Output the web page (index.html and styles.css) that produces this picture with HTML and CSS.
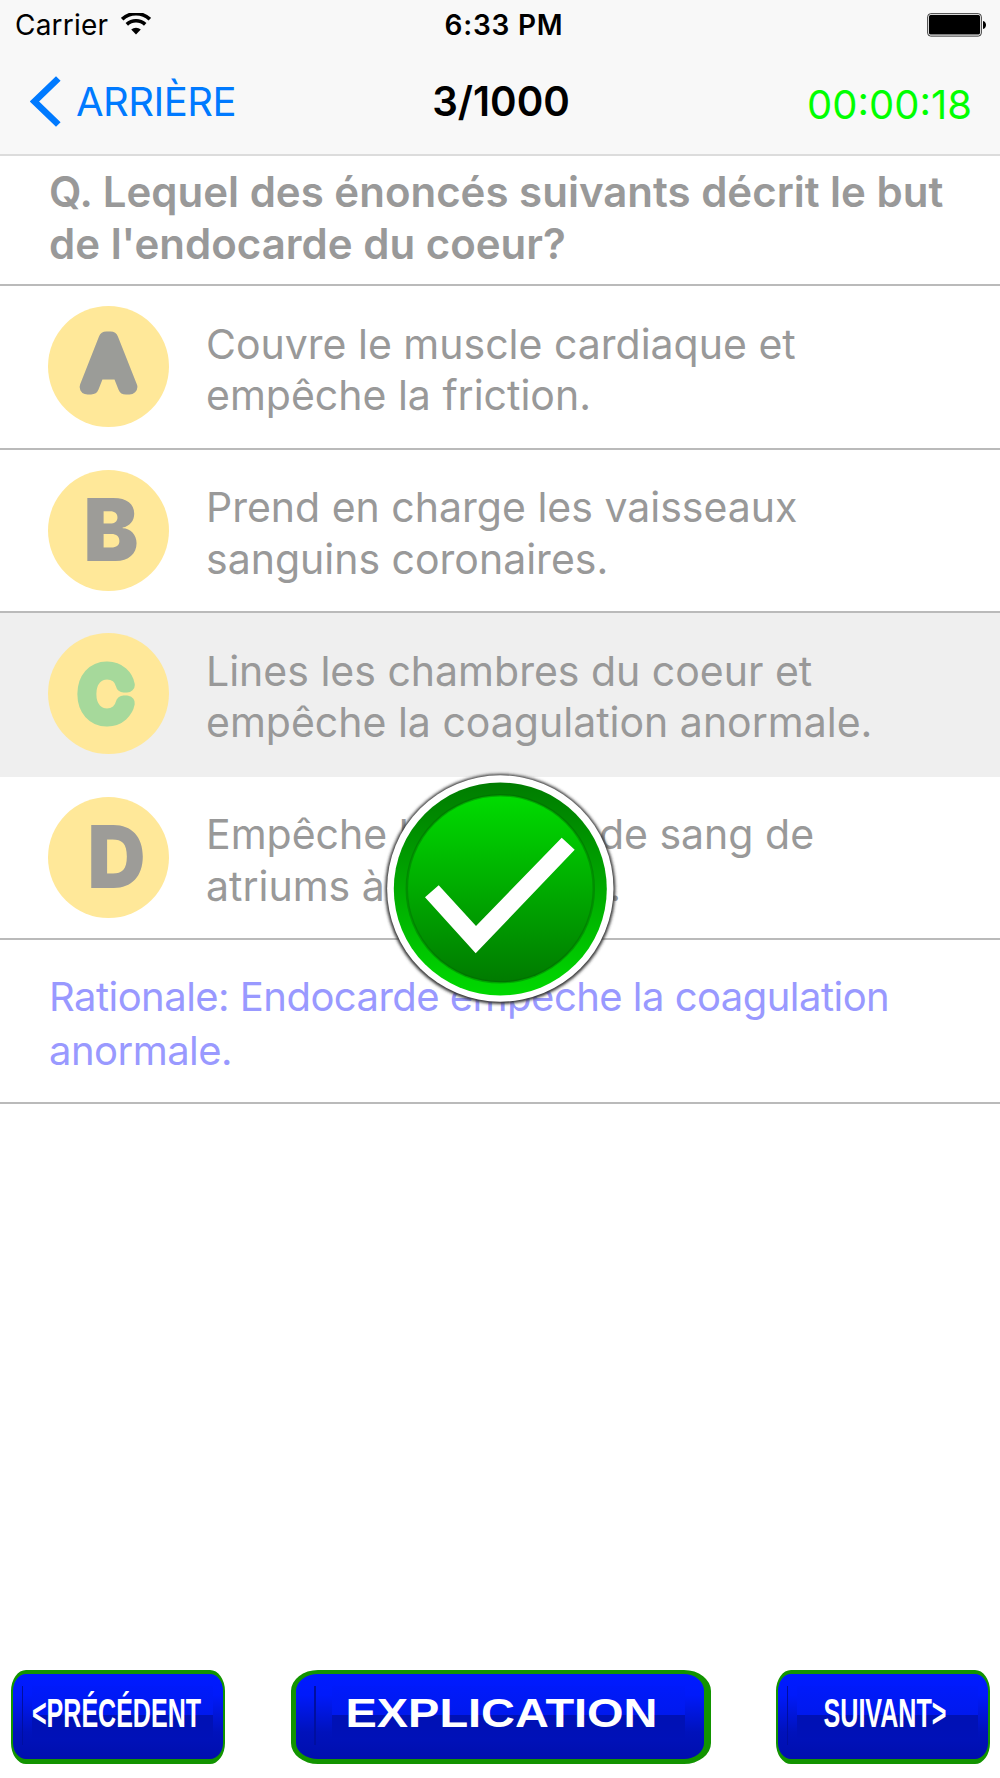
FILE: index.html
```html
<!DOCTYPE html>
<html lang="fr">
<head>
    <meta charset="UTF-8">
    <meta name="viewport" content="width=device-width, initial-scale=1.0">
    <title>Quiz</title>
    <link rel="stylesheet" href="styles.css">
</head>
<body>

<header class="header">
    <div class="status-bar">
        <div class="carrier">
            <span>Carrier</span>
            <svg class="wifi" width="30" height="22" viewBox="0 0 30 22">
                <path d="M1.2 6.2 A20 20 0 0 1 28.8 6.2" fill="none" stroke="#000" stroke-width="3.6"/>
                <path d="M5.8 11.4 A13.5 13.5 0 0 1 24.2 11.4" fill="none" stroke="#000" stroke-width="3.6"/>
                <path d="M10.2 16.6 A7 7 0 0 1 19.8 16.6 L15 21.4 Z"/>
            </svg>
        </div>
        <div class="clock">6:33 PM</div>
        <svg class="battery" width="60" height="24" viewBox="0 0 60 24">
            <rect x="0.7" y="0.7" width="53.6" height="22.4" rx="3" fill="#fff" stroke="#333" stroke-width="1"/>
            <rect x="2" y="2" width="51" height="19.6" rx="1.5"/>
            <path d="M56 8 C60 9 60 15 56 16 Z"/>
        </svg>
    </div>
    <div class="nav-bar">
        <a class="back">
            <svg width="31" height="51" viewBox="0 0 31 51">
                <path d="M28.3 2.5 L4.5 25.5 L28.3 48.5" fill="none" stroke="#007aff" stroke-width="6.6"/>
            </svg>
            <span>ARRIÈRE</span>
        </a>
        <div class="counter">3/1000</div>
        <div class="timer">00:00:18</div>
    </div>
</header>

<main class="quiz">
    <div class="question">Q. Lequel des énoncés suivants décrit le but<br>de l'endocarde du coeur?</div>

    <div class="answer">
        <svg class="letter" width="121" height="121" viewBox="0 0 121 121">
            <circle cx="60.5" cy="60.5" r="60.5"/>
            <text class="rounded" x="37.5" y="80.5" font-size="66" textLength="46" lengthAdjust="spacingAndGlyphs">A</text>
        </svg>
        <p>Couvre le muscle cardiaque et<br>empêche la friction.</p>
    </div>
    <div class="answer">
        <svg class="letter" width="121" height="121" viewBox="0 0 121 121">
            <circle cx="60.5" cy="60.5" r="60.5"/>
            <text x="35.5" y="91" font-size="86" textLength="55" lengthAdjust="spacingAndGlyphs">B</text>
        </svg>
        <p>Prend en charge les vaisseaux<br>sanguins coronaires.</p>
    </div>
    <div class="answer selected">
        <svg class="letter" width="121" height="121" viewBox="0 0 121 121">
            <circle cx="60.5" cy="60.5" r="60.5"/>
            <text class="rounded correct" x="32.5" y="84.5" font-size="67" textLength="51" lengthAdjust="spacingAndGlyphs">C</text>
        </svg>
        <p>Lines les chambres du coeur et<br>empêche la coagulation anormale.</p>
    </div>
    <div class="answer">
        <svg class="letter" width="121" height="121" viewBox="0 0 121 121">
            <circle cx="60.5" cy="60.5" r="60.5"/>
            <text x="39.5" y="91" font-size="86" textLength="58" lengthAdjust="spacingAndGlyphs">D</text>
        </svg>
        <p>Empêche <span class="tight">le courant</span> de sang de<br>atriums à ventricules.</p>
    </div>

    <div class="rationale">Rationale: Endocarde empeche la coagulation<br>anormale.</div>

    <svg class="result" width="260" height="260" viewBox="0 0 260 260">
        <defs>
            <linearGradient id="rim" x1="0" y1="0" x2="0" y2="1">
                <stop offset="0" stop-color="#007d00"/>
                <stop offset="0.15" stop-color="#008800"/>
                <stop offset="0.9" stop-color="#00d000"/>
                <stop offset="1" stop-color="#00d800"/>
            </linearGradient>
            <linearGradient id="face" x1="0" y1="0" x2="0" y2="1">
                <stop offset="0" stop-color="#00dc00"/>
                <stop offset="1" stop-color="#007a00"/>
            </linearGradient>
            <filter id="soft" x="-10%" y="-10%" width="120%" height="120%">
                <feGaussianBlur stdDeviation="1.8"/>
            </filter>
        </defs>
        <circle cx="130.3" cy="129" r="115" fill="#333" filter="url(#soft)"/>
        <circle cx="130.3" cy="128.5" r="113.2" fill="#fff"/>
        <circle cx="130.3" cy="129" r="106.5" fill="url(#rim)"/>
        <circle cx="130.3" cy="128.8" r="93.5" fill="url(#face)" stroke="#006400" stroke-opacity="0.4" stroke-width="2.5"/>
        <path d="M55 137.3 L68.7 125.3 L106 166 L191.7 77.7 L204.7 89.7 L105.7 193.3 Z" fill="#fff"/>
    </svg>
</main>

<footer class="toolbar">
    <button class="btn">
        <svg width="210" height="85" viewBox="0 0 210 85">
            <text x="19" y="53" textLength="169" lengthAdjust="spacingAndGlyphs">&lt;PRÉCÉDENT</text>
        </svg>
    </button>
    <button class="btn wide">
        <svg width="408" height="85" viewBox="0 0 408 85">
            <text x="49.5" y="53" textLength="312" lengthAdjust="spacingAndGlyphs">EXPLICATION</text>
        </svg>
    </button>
    <button class="btn">
        <svg width="210" height="85" viewBox="0 0 210 85">
            <text x="45.5" y="53" textLength="123" lengthAdjust="spacingAndGlyphs">SUIVANT&gt;</text>
        </svg>
    </button>
</footer>

</body>
</html>
```
FILE: styles.css
```css
* {
    box-sizing: border-box;
}

body {
    font-family: Inter, "Liberation Sans", sans-serif;
    background-color: #fff;
    margin: 0;
    height: 1778px;
    display: flex;
    flex-direction: column;
    overflow: hidden;
}

.header {
    height: 156px;
    background-color: #f8f8f8;
    border-bottom: 2px solid #dcdcdc;
}

.status-bar {
    height: 50px;
    padding: 0 13px 0 15px;
    display: grid;
    grid-template-columns: 1fr auto 1fr;
    align-items: center;
    font-size: 28px;
}

.carrier {
    display: flex;
    align-items: center;
    gap: 13px;
    letter-spacing: 0.2px;
}

.wifi {
    margin-bottom: 3px;
}

.clock {
    padding-left: 6px;
    font-weight: 600;
    font-size: 28px;
    letter-spacing: 0.8px;
}

.battery {
    justify-self: end;
}

.nav-bar {
    height: 103px;
    padding: 0 28px 0 30px;
    display: grid;
    grid-template-columns: 1fr auto 1fr;
    align-items: center;
    font-size: 40px;
}

.back {
    display: flex;
    align-items: center;
    gap: 15px;
    color: #007aff;
    letter-spacing: -0.5px;
}

.counter {
    font-weight: 600;
    font-size: 40.3px;
}

.timer {
    justify-self: end;
    padding-top: 6px;
    color: #0f0;
}

.quiz {
    flex: 1;
    position: relative;
    color: #999;
    font-size: 41px;
    line-height: 51.6px;
}

.question {
    height: 130px;
    padding: 10px 49px 0;
    font-size: 42px;
    font-weight: 600;
    border-bottom: 2px solid #bababa;
    white-space: nowrap;
}

.answer {
    height: 163.6px;
    padding-left: 48px;
    display: flex;
    align-items: center;
    gap: 37px;
    border-bottom: 2px solid #bababa;
    white-space: nowrap;
}

.answer p {
    margin: 7px 0 0;
}

.answer.selected {
    background-color: #efefef;
    border-bottom-color: #efefef;
}

.tight {
    letter-spacing: -0.5px;
}

.letter {
    flex: none;
}

.letter circle {
    fill: #ffe899;
}

.letter text {
    fill: #9d9c98;
    font-weight: 900;
}

.letter .rounded {
    fill: #9b9c98;
    stroke: #9b9c98;
    stroke-width: 15px;
    stroke-linejoin: round;
    font-weight: 200;
}

.letter .correct {
    fill: #a6d99b;
    stroke: #a6d99b;
}

.rationale {
    height: 163.6px;
    padding: 30px 49px 0;
    font-size: 40px;
    letter-spacing: -0.53px;
    line-height: 53.5px;
    color: #9999ff;
    border-bottom: 2px solid #bababa;
    white-space: nowrap;
}

/* result badge floats over the answers */
.result {
    position: absolute;
    left: 370px;
    top: 604px;
}

.toolbar {
    height: 108px;
    padding: 0 10px 0 11px;
    display: flex;
    justify-content: space-between;
    align-items: flex-start;
}

.btn {
    width: 214px;
    height: 94px;
    padding: 0;
    display: flex;
    border: solid #129400;
    border-width: 4px 2px 5px;
    border-radius: 15px / 21px;
    background:
        linear-gradient(#000fa0, #000fa0) 9px 12px / 1px 59px no-repeat,
        linear-gradient(#001afa, #0019ee 55%, #0011b4 55%, #0011b8) 19px 12px / 181px 52px no-repeat,
        linear-gradient(#001bff, #001afa 25%, #0012bc 68%, #000fae);
    background-origin: padding-box;
}

.btn.wide {
    width: 420px;
    border-width: 4px 7px 5px 5px;
    border-radius: 27px / 21px;
    background:
        linear-gradient(#000fa0, #000fa0) 18px 12px / 2px 59px no-repeat,
        linear-gradient(#001afa, #0019ee 55%, #0011b4 55%, #0011b8) 36px 12px / 353px 52px no-repeat,
        linear-gradient(#001bff, #001afa 25%, #0012bc 68%, #000fae);
}

.btn text {
    font-family: "Liberation Sans", Arial, sans-serif;
    font-weight: bold;
    font-size: 41px;
    fill: #fff;
}
```
